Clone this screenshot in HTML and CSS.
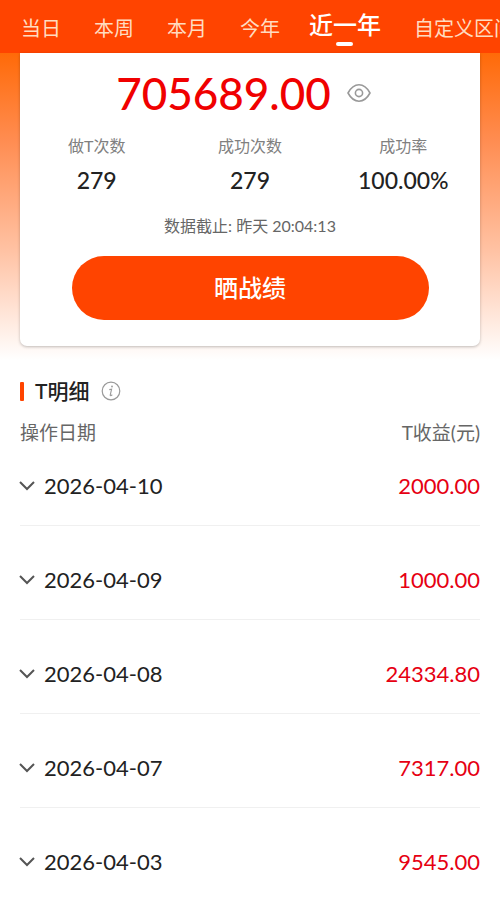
FILE: index.html
```html
<!DOCTYPE html>
<html lang="zh-CN">
<head>
    <meta charset="UTF-8">
    <meta name="viewport" content="width=device-width, initial-scale=1.0">
    <title>做T战绩</title>
    <link rel="stylesheet" href="styles.css">
</head>
<body>
    <nav class="tabs">
        <button type="button" class="tab">当日</button>
        <button type="button" class="tab">本周</button>
        <button type="button" class="tab">本月</button>
        <button type="button" class="tab">今年</button>
        <button type="button" class="tab active">近一年</button>
        <button type="button" class="tab">自定义区间</button>
    </nav>

    <div class="hero">
        <div class="card">
            <div class="total">
                <span class="total-value">705689.00</span>
                <button type="button" class="eye" aria-label="隐藏金额">
                    <svg width="24" height="20" viewBox="0 0 24 20" fill="none" stroke="#999" stroke-width="1.6">
                        <path d="M1 10C4 4.500 7.500 1.800 12 1.800S20 4.500 23 10C20 15.500 16.500 18.200 12 18.200S4 15.500 1 10Z" stroke-linejoin="round"/>
                        <circle cx="12" cy="10" r="3.600"/>
                    </svg>
                </button>
            </div>
            <dl class="stats">
                <div>
                    <dt>做T次数</dt>
                    <dd>279</dd>
                </div>
                <div>
                    <dt>成功次数</dt>
                    <dd>279</dd>
                </div>
                <div>
                    <dt>成功率</dt>
                    <dd>100.00%</dd>
                </div>
            </dl>
            <p class="deadline">数据截止: 昨天 20:04:13</p>
            <button type="button" class="share">晒战绩</button>
        </div>
    </div>

    <section class="details">
        <div class="title">
            <h2>T明细</h2>
            <button type="button" class="info" aria-label="说明">
                <svg width="20" height="20" viewBox="0 0 20 20" fill="none" stroke="#999">
                    <circle cx="10" cy="10" r="8.800" stroke-width="1.200"/>
                    <path d="M8.300 8.600L10.600 8.200L9.200 14Q9.100 15 10.200 14.500L11.300 13.800" stroke-width="1.100"/>
                    <circle cx="11" cy="5.500" r=".9" fill="#999" stroke="none"/>
                </svg>
            </button>
        </div>
        <table>
            <thead>
                <tr>
                    <th>操作日期</th>
                    <th class="profit">T收益(元)</th>
                </tr>
            </thead>
            <tbody>
                <tr>
                    <td><button type="button" class="date"><svg width="16" height="10" viewBox="0 0 16 10"><path d="M0 1L7 8L14 1"/></svg>2026-04-10</button></td>
                    <td class="profit">2000.00</td>
                </tr>
                <tr>
                    <td><button type="button" class="date"><svg width="16" height="10" viewBox="0 0 16 10"><path d="M0 1L7 8L14 1"/></svg>2026-04-09</button></td>
                    <td class="profit">1000.00</td>
                </tr>
                <tr>
                    <td><button type="button" class="date"><svg width="16" height="10" viewBox="0 0 16 10"><path d="M0 1L7 8L14 1"/></svg>2026-04-08</button></td>
                    <td class="profit">24334.80</td>
                </tr>
                <tr>
                    <td><button type="button" class="date"><svg width="16" height="10" viewBox="0 0 16 10"><path d="M0 1L7 8L14 1"/></svg>2026-04-07</button></td>
                    <td class="profit">7317.00</td>
                </tr>
                <tr>
                    <td><button type="button" class="date"><svg width="16" height="10" viewBox="0 0 16 10"><path d="M0 1L7 8L14 1"/></svg>2026-04-03</button></td>
                    <td class="profit">9545.00</td>
                </tr>
            </tbody>
        </table>
    </section>
</body>
</html>
```
FILE: styles.css
```css
* {
    box-sizing: border-box;
}

body {
    margin: 0;
    background: #fff;
    color: #222;
    font-family: Lato, "Noto Sans CJK SC", sans-serif;
}

button {
    padding: 0;
    border: none;
    background: none;
    color: inherit;
    font: inherit;
    cursor: pointer;
}

svg {
    display: block;
    overflow: visible;
}

/* tabs */
.tabs {
    display: flex;
    gap: 33px;
    height: 53px;
    padding: 0 21px;
    overflow: hidden;
    background: #ff4400;
}

.tab {
    position: relative;
    flex: none;
    padding-top: 3px;
    color: #ffdcc0;
    font-size: 20px;
    line-height: 50px;
}

.tab.active {
    margin-left: -4px;
    padding: 0 0 3px;
    color: #fff;
    font-size: 24px;
    font-weight: 500;
}

.tab.active::after {
    content: "";
    position: absolute;
    left: 50%;
    bottom: 7px;
    width: 17px;
    height: 4px;
    margin-left: -9px;
    border-radius: 2px;
    background: #fff;
}

/* summary card */
.hero {
    padding: 0 20px 14px;
    background: linear-gradient(#ff6a08, #ff8c50 28%, #ffc3a5 65%, #fff);
}

.card {
    padding: 12px 0 26px;
    border-radius: 0 0 7px 7px;
    background: #fff;
    box-shadow: 0 1px 3px rgba(0, 0, 0, 0.25);
    text-align: center;
}

.total {
    display: flex;
    justify-content: center;
    align-items: center;
    gap: 16px;
    padding-right: 13px;
}

.total-value {
    color: #f00000;
    font-size: 44px;
    font-weight: 500;
    line-height: 56px;
}

.stats {
    display: grid;
    grid-template-columns: repeat(3, 1fr);
    margin: 13px 0 18px;
}

.stats dt {
    margin-bottom: 6px;
    color: #808080;
    font-size: 16px;
    line-height: 24px;
}

.stats dd {
    margin: 0;
    font-size: 23px;
    font-weight: 500;
    line-height: 32px;
}

.deadline {
    margin: 0 0 18px;
    color: #666;
    font-size: 16px;
    line-height: 24px;
}

.share {
    width: calc(100% - 103px);
    height: 64px;
    border-radius: 32px;
    background: #ff4400;
    color: #fff;
    font-size: 24px;
    font-weight: 500;
    line-height: 62px;
}

/* detail list */
.details {
    padding: 15px 20px 0;
}

.title {
    display: flex;
    align-items: center;
    gap: 12px;
    margin-bottom: 11px;
}

.title h2 {
    display: flex;
    align-items: center;
    gap: 11px;
    margin: 0;
    font-size: 21px;
    font-weight: 500;
    line-height: 32px;
}

.title h2::before {
    content: "";
    width: 4px;
    height: 19px;
    border-radius: 1px;
    background: #ff4400;
}

table {
    width: 100%;
    border-collapse: separate;
    border-spacing: 0;
}

th {
    padding: 0;
    color: #666;
    font-size: 19px;
    font-weight: 400;
    line-height: 30px;
    text-align: left;
}

td {
    padding: 38px 0 23px;
    border-bottom: 1px solid #f0f0f0;
    font-size: 22px;
    line-height: 32px;
}

tbody tr:first-child td {
    padding-top: 22px;
}

tbody tr:last-child td {
    padding-bottom: 0;
    border-bottom: none;
}

.profit {
    text-align: right;
}

td.profit {
    color: #e60012;
}

.date {
    display: flex;
    align-items: center;
    gap: 8px;
}

.date svg {
    fill: none;
    stroke: #555;
    stroke-width: 2;
}
```
